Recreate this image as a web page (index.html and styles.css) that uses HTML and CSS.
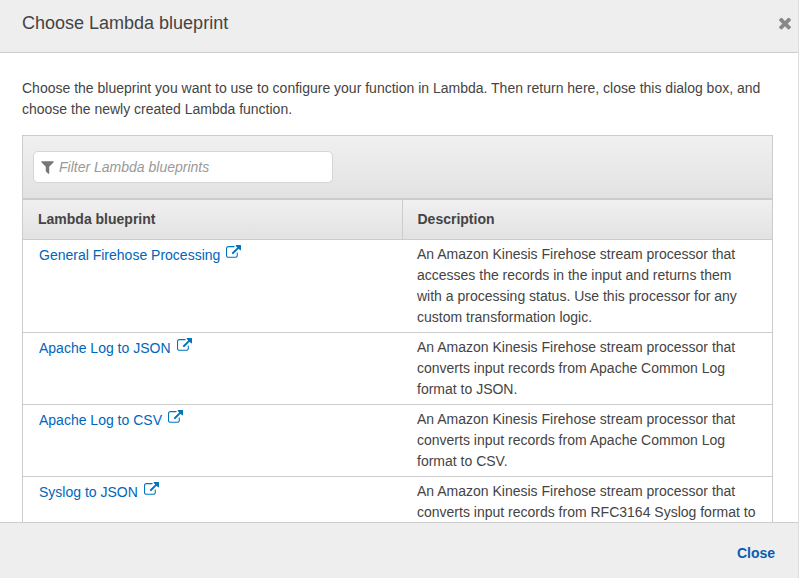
FILE: index.html
```html
<!DOCTYPE html>
<html lang="en">
<head>
<meta charset="utf-8">
<title>Choose Lambda blueprint</title>
<link rel="stylesheet" href="styles.css">
</head>
<body>
<div class="dialog">
  <header class="dialog-header">
    <h1 class="dialog-title">Choose Lambda blueprint</h1>
    <button class="dialog-x" aria-label="Close">
      <svg class="icon-x" viewBox="0 0 1408 1792"><path d="M1298 1322q0 40-28 68l-136 136q-28 28-68 28t-68-28l-294-294-294 294q-28 28-68 28t-68-28l-136-136q-28-28-28-68t28-68l294-294-294-294q-28-28-28-68t28-68l136-136q28-28 68-28t68 28l294 294 294-294q28-28 68-28t68 28l136 136q28 28 28 68t-28 68l-294 294 294 294q28 28 28 68z"/></svg>
    </button>
  </header>
  <main class="dialog-body">
    <p class="intro">Choose the blueprint you want to use to configure your function in Lambda. Then return here, close this dialog box, and choose the newly created Lambda function.</p>
    <section class="panel">
      <div class="toolbar">
        <label class="filter">
          <svg class="icon-filter" viewBox="0 0 1408 1792"><path d="M1403 295q17 41-14 70l-493 493v742q0 42-39 59-13 5-25 5-27 0-45-19l-256-256q-19-19-19-45v-486l-493-493q-31-29-14-70 17-39 59-39h1280q42 0 59 39z"/></svg>
          <span class="filter-text">Filter Lambda blueprints</span>
        </label>
      </div>
      <table class="grid">
        <thead>
          <tr><th class="col-name">Lambda blueprint</th><th class="col-desc">Description</th></tr>
        </thead>
        <tbody>
          <tr>
            <td class="name"><a href="#">General Firehose Processing<svg class="icon-ext" viewBox="0 0 1792 1792"><path d="M1408 928v320q0 119-84.5 203.5t-203.5 84.5h-832q-119 0-203.5-84.5t-84.5-203.5v-832q0-119 84.5-203.5t203.5-84.5h704q14 0 23 9t9 23v64q0 14-9 23t-23 9h-704q-66 0-113 47t-47 113v832q0 66 47 113t113 47h832q66 0 113-47t47-113v-320q0-14 9-23t23-9h64q14 0 23 9t9 23zm384-864v512q0 26-19 45t-45 19-45-19l-176-176-652 652q-10 10-23 10t-23-10l-114-114q-10-10-10-23t10-23l652-652-176-176q-19-19-19-45t19-45 45-19h512q26 0 45 19t19 45z"/></svg></a></td>
            <td class="desc">An Amazon Kinesis Firehose stream processor that accesses the records in the input and returns them with a processing status. Use this processor for any custom transformation logic.</td>
          </tr>
          <tr>
            <td class="name"><a href="#">Apache Log to JSON<svg class="icon-ext" viewBox="0 0 1792 1792"><path d="M1408 928v320q0 119-84.5 203.5t-203.5 84.5h-832q-119 0-203.5-84.5t-84.5-203.5v-832q0-119 84.5-203.5t203.5-84.5h704q14 0 23 9t9 23v64q0 14-9 23t-23 9h-704q-66 0-113 47t-47 113v832q0 66 47 113t113 47h832q66 0 113-47t47-113v-320q0-14 9-23t23-9h64q14 0 23 9t9 23zm384-864v512q0 26-19 45t-45 19-45-19l-176-176-652 652q-10 10-23 10t-23-10l-114-114q-10-10-10-23t10-23l652-652-176-176q-19-19-19-45t19-45 45-19h512q26 0 45 19t19 45z"/></svg></a></td>
            <td class="desc">An Amazon Kinesis Firehose stream processor that converts input records from Apache Common Log format to JSON.</td>
          </tr>
          <tr>
            <td class="name"><a href="#">Apache Log to CSV<svg class="icon-ext" viewBox="0 0 1792 1792"><path d="M1408 928v320q0 119-84.5 203.5t-203.5 84.5h-832q-119 0-203.5-84.5t-84.5-203.5v-832q0-119 84.5-203.5t203.5-84.5h704q14 0 23 9t9 23v64q0 14-9 23t-23 9h-704q-66 0-113 47t-47 113v832q0 66 47 113t113 47h832q66 0 113-47t47-113v-320q0-14 9-23t23-9h64q14 0 23 9t9 23zm384-864v512q0 26-19 45t-45 19-45-19l-176-176-652 652q-10 10-23 10t-23-10l-114-114q-10-10-10-23t10-23l652-652-176-176q-19-19-19-45t19-45 45-19h512q26 0 45 19t19 45z"/></svg></a></td>
            <td class="desc">An Amazon Kinesis Firehose stream processor that converts input records from Apache Common Log format to CSV.</td>
          </tr>
          <tr>
            <td class="name"><a href="#">Syslog to JSON<svg class="icon-ext" viewBox="0 0 1792 1792"><path d="M1408 928v320q0 119-84.5 203.5t-203.5 84.5h-832q-119 0-203.5-84.5t-84.5-203.5v-832q0-119 84.5-203.5t203.5-84.5h704q14 0 23 9t9 23v64q0 14-9 23t-23 9h-704q-66 0-113 47t-47 113v832q0 66 47 113t113 47h832q66 0 113-47t47-113v-320q0-14 9-23t23-9h64q14 0 23 9t9 23zm384-864v512q0 26-19 45t-45 19-45-19l-176-176-652 652q-10 10-23 10t-23-10l-114-114q-10-10-10-23t10-23l652-652-176-176q-19-19-19-45t19-45 45-19h512q26 0 45 19t19 45z"/></svg></a></td>
            <td class="desc">An Amazon Kinesis Firehose stream processor that converts input records from RFC3164 Syslog format to JSON.</td>
          </tr>
        </tbody>
      </table>
    </section>
  </main>
  <footer class="dialog-footer">
    <a class="close-link" href="#">Close</a>
  </footer>
</div>
</body>
</html>
```
FILE: styles.css
```css
* { box-sizing: border-box; }
html, body { margin: 0; height: 100%; overflow: hidden; }
body {
  background: #fff;
  color: #444;
  font-family: "Liberation Sans", Arial, sans-serif;
  font-size: 14px;
  line-height: 21px;
}
.dialog {
  height: 578px;
  display: flex;
  flex-direction: column;
  border-right: 1px solid #ddd;
}
.dialog-header {
  flex: none;
  height: 53px;
  background: #eee;
  border-bottom: 1px solid #ccc;
  display: flex;
  align-items: flex-start;
  justify-content: space-between;
  padding: 12px 6px 0 22px;
}
.dialog-title {
  margin: 0;
  font-size: 18px;
  font-weight: 400;
  line-height: 22px;
  color: #444;
}
.dialog-x {
  border: 0;
  padding: 0;
  background: none;
  margin-top: 2px;
  display: flex;
}
.icon-x { width: 14px; height: 18px; fill: #888; }
.dialog-body {
  flex: 1;
  min-height: 0;
  overflow: hidden;
  padding: 25px 25px 0 22px;
}
.intro { margin: 0 0 15px; }
.panel { border: 1px solid #ccc; border-bottom: 0; }
.toolbar {
  height: 64px;
  padding: 15px 10px 0;
  background: linear-gradient(#f0f0f0, #e2e2e2);
  border-bottom: 2px solid #ccc;
}
.filter {
  width: 300px;
  height: 32px;
  background: #fff;
  border: 1px solid #d5d5d5;
  border-radius: 5px;
  display: flex;
  align-items: center;
  padding-left: 7px;
  gap: 5px;
}
.icon-filter { width: 13px; height: 16px; fill: #777; flex: none; }
.filter-text { color: #999; font-style: italic; }
.grid {
  width: 100%;
  table-layout: fixed;
  border-collapse: collapse;
}
.col-name { width: 379px; border-right: 1px solid #ccc; }
.grid th {
  height: 39px;
  padding: 1px 1px 0 15px;
  text-align: left;
  font-weight: 700;
  color: #444;
  background: linear-gradient(#f0f0f0, #e2e2e2);
  border-bottom: 1px solid #ccc;
}
.grid td {
  vertical-align: top;
  padding: 4px 14px 4px 15px;
  border-bottom: 1px solid #ccc;
}
.grid td.name { padding: 5px 16px 4px 16px; }
.name a { color: #0066bb; text-decoration: none; }
.icon-ext {
  width: 15px;
  height: 15px;
  fill: #0073bb;
  margin-left: 6px;
  vertical-align: 0;
}
.dialog-footer {
  flex: none;
  height: 56px;
  background: #eee;
  border-top: 1px solid #ccc;
  display: flex;
  justify-content: flex-end;
  align-items: flex-start;
  padding: 20px 23px 0 0;
}
.close-link {
  color: #0a5cb0;
  font-weight: 700;
  text-decoration: none;
}
```
